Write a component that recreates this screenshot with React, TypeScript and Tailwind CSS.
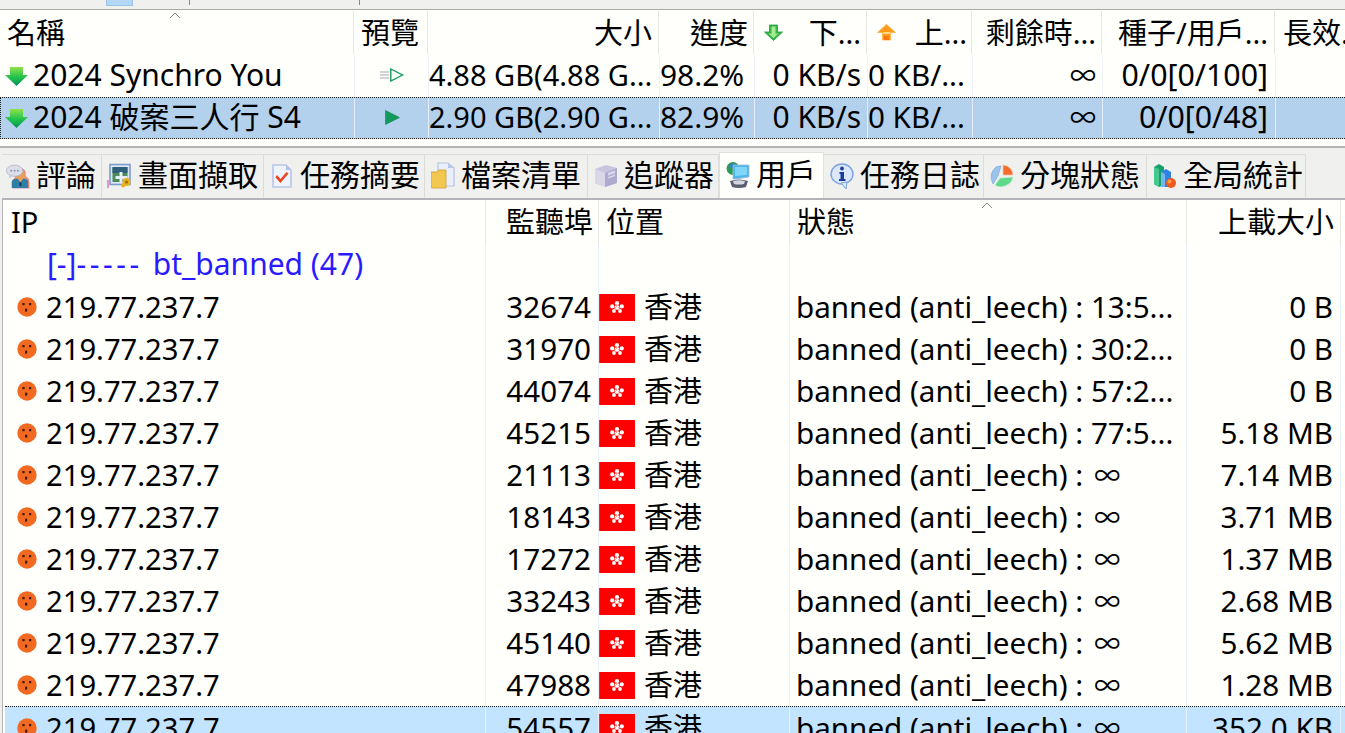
import React from "react";

const font = "font-['Noto_Sans','Noto_Sans_CJK_TC',sans-serif]";
const topHead = "grid grid-cols-[354px_74px_231px_95px_113px_105px_130px_173px_70px] h-[45px]";
const topRow = "grid grid-cols-[355px_74px_231px_95px_113px_105px_130px_173px_69px] h-[42px]";
const topRowSel = "grid grid-cols-[354px_74px_231px_95px_113px_105px_130px_173px_69px] h-[42px]";
const peerGrid = "grid grid-cols-[483px_113px_191px_397px_154px_5px]";
const peerGridSel = "grid grid-cols-[481px_113px_191px_397px_154px_5px]";

function Down({ className = "" }: { className?: string }) {
  return (
    <svg width="24" height="19" viewBox="0 0 24 19" className={className}>
      <defs>
        <linearGradient id="dg" x1="0" y1="0" x2="0" y2="1">
          <stop offset="0" stopColor="#8fe24a" />
          <stop offset="0.55" stopColor="#1fc24c" />
          <stop offset="1" stopColor="#0a8f58" />
        </linearGradient>
      </defs>
      <path d="M5 0H18V8H23L11.5 19L0 8H5Z" fill="url(#dg)" />
    </svg>
  );
}

function HeadArrow({ up }: { up?: boolean }) {
  return up ? (
    <svg width="19" height="17" viewBox="0 0 19 17">
      <path d="M9.5 0.5L18.5 8.5H13.5V16H5.5V8.5H0.5Z" fill="#ff9a1a" stroke="#fbb040" strokeWidth="0.8" />
      <path d="M6 8H13V10H6Z" fill="#ffd98a" />
      <path d="M7 12H12V16H7Z" fill="#f47a10" />
    </svg>
  ) : (
    <svg width="19" height="17" viewBox="0 0 19 17">
      <path d="M5.5 1H13.5V8H18.5L9.5 16.5L0.5 8H5.5Z" fill="#35b54a" stroke="#1f9a3c" strokeWidth="0.8" />
      <path d="M7.5 2.5H11.5V9.5H14.5L9.5 14L4.5 9.5H7.5Z" fill="#a4ea8e" />
    </svg>
  );
}

function Face() {
  return (
    <svg width="20" height="20" viewBox="0 0 20 20" className="shrink-0">
      <circle cx="10" cy="10" r="9.7" fill="#f26a21" />
      <rect x="5.4" y="6" width="2.2" height="2.2" fill="#3a1a08" />
      <rect x="12" y="6" width="2.2" height="2.2" fill="#3a1a08" />
      <rect x="8" y="11.4" width="2.2" height="3.4" rx="1" fill="#3a1a08" />
    </svg>
  );
}

function Flag() {
  return (
    <svg width="36" height="27" viewBox="0 0 36 27" className="shrink-0">
      <rect width="36" height="27" fill="#ff0000" />
      <rect width="1" height="27" fill="#2f8a3a" />
      <g fill="#fff">
        <circle cx="18" cy="9.2" r="2.1" />
        <circle cx="13.2" cy="12.4" r="2.1" />
        <circle cx="22.8" cy="12.4" r="2.1" />
        <circle cx="15" cy="17" r="1.9" />
        <circle cx="21" cy="17" r="1.9" />
        <circle cx="18" cy="13.6" r="2.5" />
      </g>
      <path d="M17.6 10V13M15 13L17 14M21 13L19 14M16.4 16.5L17.4 15M19.6 16.5L18.6 15" stroke="#ff5050" strokeWidth="0.6" />
    </svg>
  );
}

const icons: Record<string, React.ReactNode> = {
  comment: (
    <svg width="25" height="25" viewBox="0 0 24 26">
      <path d="M9 8C10 3 18 3 20 8V13L22 14Q24 15 24 20V25H7V20Q7 15 10 14Z" fill="#e9a05f" stroke="#d75f9a" strokeWidth="0.6" />
      <path d="M6 25V18Q8 15 12 15L15 19L18 15Q22 15 23 18V25Z" fill="#2f7ea8" />
      <path d="M14 19H16V23H14Z" fill="#123a55" />
      <ellipse cx="9" cy="7" rx="8.5" ry="5.8" fill="#dcdfea" stroke="#a9adc4" strokeWidth="0.8" />
      <path d="M4 11L3 15L8 12Z" fill="#c6cada" />
      <circle cx="5.5" cy="7" r="0.9" fill="#7b86a8" />
      <circle cx="9" cy="7" r="0.9" fill="#7b86a8" />
      <circle cx="12.5" cy="7" r="0.9" fill="#7b86a8" />
    </svg>
  ),
  shot: (
    <svg width="25" height="26" viewBox="0 0 24 26">
      <rect x="0" y="17" width="1" height="8" fill="#d6409a" />
      <rect x="2.5" y="1.5" width="20" height="20" fill="#dce6f5" stroke="#7d9ec8" strokeWidth="1.6" />
      <rect x="5" y="4" width="15" height="15" fill="#4c8a58" />
      <rect x="5" y="4" width="15" height="6" fill="#2f5f7c" />
      <rect x="12" y="9" width="3" height="11" fill="#e6eefa" />
      <rect x="8" y="13" width="12" height="3" fill="#e6eefa" />
      <circle cx="19" cy="19" r="4" fill="#e7b21c" />
      <circle cx="19" cy="19" r="1.6" fill="#a06f10" />
      <circle cx="15.5" cy="22.5" r="2" fill="#e7b21c" />
    </svg>
  ),
  summary: (
    <svg width="20" height="26" viewBox="0 0 20 26">
      <path d="M1 2H14L19 7V24H1Z" fill="#eef3fc" stroke="#b9c5ea" strokeWidth="1.6" />
      <path d="M14 2V7H19Z" fill="#aebfe8" />
      <path d="M5 12L8.5 16L14.5 9L16.5 10.5L8.5 20L3.5 14.5Z" fill="#ea4420" />
    </svg>
  ),
  files: (
    <svg width="24" height="28" viewBox="0 0 24 28">
      <path d="M7 1H17L23 6V24H7Z" fill="#eaf0fb" stroke="#b4c2e4" strokeWidth="1.2" />
      <path d="M17 1V6H23Z" fill="#b8c8ec" />
      <path d="M0 10H6L8 8H15V26H1Q0 26 0 25Z" fill="#f2c94e" stroke="#cfa030" strokeWidth="0.8" />
    </svg>
  ),
  tracker: (
    <svg width="24" height="24" viewBox="0 0 24 24">
      <path d="M1 5L12 1L23 4V19L11 23L1 19Z" fill="#c8c6de" />
      <path d="M1 5L11 9V23L1 19Z" fill="#dad8e8" />
      <path d="M11 9L23 4V19L11 23Z" fill="#aeabd0" />
      <path d="M14 9L21 6.5V9L14 11.5ZM14 13L21 10.5V12L14 14.5Z" fill="#dcdaec" />
    </svg>
  ),
  peers: (
    <svg width="24" height="28" viewBox="0 0 24 28">
      <circle cx="7" cy="7.5" r="6.5" fill="#2f9a58" />
      <path d="M3 4Q7 1 9 4L6 8Z" fill="#2b7fd4" />
      <path d="M7 4H23V16L10 18H7Z" fill="#4db4ee" stroke="#a8bdd2" strokeWidth="0.8" />
      <path d="M9 6H21V14L9 15Z" fill="#7fd6f8" />
      <path d="M4 20Q13 17 22 20L20 26Q13 28 6 26Z" fill="#5a6072" />
      <path d="M7 20Q13 18.5 19 20L18 23Q13 24 8 23Z" fill="#d4d7df" />
    </svg>
  ),
  log: (
    <svg width="24" height="26" viewBox="0 0 24 26">
      <ellipse cx="12" cy="11" rx="11" ry="10" fill="#dbe8fb" stroke="#7ba3dd" strokeWidth="1.4" />
      <path d="M11 20L16 26L17 19Z" fill="#dbe8fb" stroke="#7ba3dd" strokeWidth="1" />
      <circle cx="12" cy="5.5" r="1.9" fill="#1a3c9c" />
      <path d="M9.5 9H14V16H15.5V18H9V16H10.5V11H9.5Z" fill="#1a3c9c" />
    </svg>
  ),
  piece: (
    <svg width="24" height="24" viewBox="0 0 24 24">
      <path d="M11 2L8 12L3 20Q-2 10 6 3Q8 2 11 2Z" fill="#9cc4ea" stroke="#6ea2d8" strokeWidth="0.6" />
      <path d="M13 1Q22 2 23 11H13Z" fill="#f46a2a" stroke="#f4c8a8" strokeWidth="0.8" />
      <path d="M10 14L23 13Q22 21 11 23Q7 23 5 21Z" fill="#5fd88a" stroke="#cdeed8" strokeWidth="0.8" />
    </svg>
  ),
  stats: (
    <svg width="24" height="26" viewBox="0 0 24 26">
      <path d="M1 4L6 1L11 4V22L6 24L1 21Z" fill="#1aa06a" />
      <path d="M1 4L6 6V24L1 21Z" fill="#44c890" />
      <path d="M8 9L13 6L18 9V24H8Z" fill="#2f84e0" />
      <path d="M8 9L12 11V24H8Z" fill="#73b6f2" />
      <circle cx="18" cy="20" r="5" fill="#f0581c" />
      <circle cx="16.5" cy="18.5" r="2" fill="#ff9a4a" />
    </svg>
  ),
};

const Sort = ({ className }: { className: string }) => (
  <svg width="12" height="7" viewBox="0 0 12 7" className={className}>
    <path d="M1 6L6 1L11 6" fill="none" stroke="#8a8a8a" strokeWidth="1" />
  </svg>
);

const tabs = [
  { t: "評論", i: "comment", w: "w-[100px] pl-[3px]" },
  { t: "畫面擷取", i: "shot", w: "w-[162px] pl-[5px]" },
  { t: "任務摘要", i: "summary", w: "w-[161px] pl-[5px]" },
  { t: "檔案清單", i: "files", w: "w-[163px] pl-[5px]" },
  { t: "追蹤器", i: "tracker", w: "w-[131px] pl-[5px]" },
  { t: "用戶", i: "peers", w: "w-[105px] pl-[5px]", active: true },
  { t: "任務日誌", i: "log", w: "w-[160px] pl-[5px]" },
  { t: "分塊狀態", i: "piece", w: "w-[163px] pl-[5px]" },
  { t: "全局統計", i: "stats", w: "w-[159px] pl-[5px]" },
];

const topCell = "flex items-center overflow-hidden whitespace-nowrap border-r pb-[2px]";
const headCell = "flex items-center overflow-hidden whitespace-nowrap border-r border-[#e6e6e2] relative my-[1px]";

const peers: [string, string, string | null, string][] = [
  ["32674", "banned (anti_leech) : 13:5...", null, "0 B"],
  ["31970", "banned (anti_leech) : 30:2...", null, "0 B"],
  ["44074", "banned (anti_leech) : 57:2...", null, "0 B"],
  ["45215", "banned (anti_leech) : 77:5...", null, "5.18 MB"],
  ["21113", "banned (anti_leech) : ", "∞", "7.14 MB"],
  ["18143", "banned (anti_leech) : ", "∞", "3.71 MB"],
  ["17272", "banned (anti_leech) : ", "∞", "1.37 MB"],
  ["33243", "banned (anti_leech) : ", "∞", "2.68 MB"],
  ["45140", "banned (anti_leech) : ", "∞", "5.62 MB"],
  ["47988", "banned (anti_leech) : ", "∞", "1.28 MB"],
  ["54557", "banned (anti_leech) : ", "∞", "352.0 KB"],
];

function PreviewIcon({ filled }: { filled?: boolean }) {
  return filled ? (
    <svg width="15" height="15" viewBox="0 0 15 15" className="ml-[2px]">
      <path d="M0.5 0.5L14.5 7.5L0.5 14.5Z" fill="#109a5c" stroke="#0d8a50" strokeWidth="0.6" />
    </svg>
  ) : (
    <svg width="24" height="14" viewBox="0 0 24 14">
      <path d="M0 4H9M0 7H9M0 10H9" stroke="#a8a8b0" strokeWidth="1.2" />
      <path d="M10.8 1L22.5 7L10.8 13Z" fill="none" stroke="#109a5c" strokeWidth="1.4" />
    </svg>
  );
}

function TopRow({ name, preview, size, pct, seeds, selected }: { name: string; preview: React.ReactNode; size: string; pct: string; seeds: string; selected?: boolean }) {
  const sep = selected ? "border-[#e4eef8]" : "border-[#eef3fa]";
  return (
    <div className={selected ? `${topRowSel} bg-[#b3d0ec] border border-r-0 border-dotted border-[#222]` : topRow}>
      <div className={`${topCell} ${sep} ${selected ? "pl-[4px]" : "pl-[5px]"} gap-[4px]`}>
        <Down className="shrink-0 mt-[2px]" />
        <span className="text-[30px]">{name}</span>
      </div>
      <div className={`${topCell} ${sep} justify-center`}>{preview}</div>
      <div className={`${topCell} ${sep} pl-0`}>{size}</div>
      <div className={`${topCell} ${sep} text-[29.9px]`}>{pct}</div>
      <div className={`${topCell} ${sep} justify-end pr-[6px] text-[30px]`}>0 KB/s</div>
      <div className={`${topCell} ${sep} text-[29.6px]`}>0 KB/...</div>
      <div className={`${topCell} ${sep} justify-end pr-[6px] text-[26px]`}>∞</div>
      <div className={`${topCell} ${sep} justify-end pr-[7px] text-[30.3px]`}>{seeds}</div>
      <div />
    </div>
  );
}

export default function App() {
  return (
    <div className={`${font} w-[1345px] h-[733px] overflow-hidden bg-[#f0f0ee] text-[29px] leading-[36px] text-black flex flex-col`}>
      <div className="h-[9px] shrink-0 flex items-start border-b border-[#a9a9a9] box-content">
        <div className="ml-[106px] w-[27px] h-[6px] bg-[#b3d7f5] border border-t-0 border-[#9cc4e8]" />
        <div className="ml-[56px] w-px h-[5px] bg-[#8a8a8a]" />
        <div className="ml-[169px] w-px h-[5px] bg-[#8a8a8a]" />
      </div>

      <div className="h-[136px] shrink-0 bg-[#fffffb] border-b-2 border-[#b4b4b4] box-content">
        <div className={topHead}>
          <div className={`${headCell} pl-[7px]`}>
            名稱
            <Sort className="absolute left-[169px] top-[1px]" />
          </div>
          <div className={`${headCell} pl-[7px]`}>預覽</div>
          <div className={`${headCell} justify-end pr-[6px]`}>大小</div>
          <div className={`${headCell} justify-end pr-[5px]`}>進度</div>
          <div className={`${headCell} justify-between pl-[10px] pr-[5px]`}>
            <HeadArrow />
            <span>下...</span>
          </div>
          <div className={`${headCell} justify-between pl-[10px] pr-[4px]`}>
            <HeadArrow up />
            <span>上...</span>
          </div>
          <div className={`${headCell} justify-end pr-[5px]`}>剩餘時...</div>
          <div className={`${headCell} justify-end pr-[6px]`}>種子/用戶...</div>
          <div className="flex items-center overflow-hidden whitespace-nowrap pl-[8px] my-[1px]">長效...</div>
        </div>
        <TopRow name="2024 Synchro You" preview={<PreviewIcon />} size="4.88 GB(4.88 G..." pct="98.2%" seeds="0/0[0/100]" />
        <TopRow name="2024 破案三人行 S4" preview={<PreviewIcon filled />} size="2.90 GB(2.90 G..." pct="82.9%" seeds="0/0[0/48]" selected />
      </div>

      <div className="h-[50px] shrink-0 flex items-end pl-[2px] text-[30px]">
        {tabs.map((tab) => (
          <div
            key={tab.t}
            className={`${tab.w} shrink-0 flex items-center gap-[6px] whitespace-nowrap overflow-hidden border-r border-[#d8d8d4] ${
              tab.active ? "h-[46px] bg-[#fffffb] border-t border-l border-[#e0e0dc]" : "h-[44px] border-t border-[#dcdcd8]"
            }`}
          >
            <span className="w-[25px] h-[28px] shrink-0 flex items-center justify-center -mt-[1px]">{icons[tab.i]}</span>
            <span className="-mt-[3px]">{tab.t}</span>
          </div>
        ))}
      </div>

      <div className="flex-1 min-h-0 ml-[2px] bg-[#fffffb] border-t-2 border-l border-[#b4b4b8] overflow-hidden">
        <div className={`${peerGrid} h-[44px]`}>
          <div className="flex items-center pl-[8px] border-r border-[#e6e6e2]">IP</div>
          <div className="flex items-center justify-end pr-[5px] border-r border-[#e6e6e2]">監聽埠</div>
          <div className="flex items-center pl-[7px] border-r border-[#e6e6e2]">位置</div>
          <div className="flex items-center pl-[7px] border-r border-[#e6e6e2] relative">
            狀態
            <Sort className="absolute left-[191px] top-[2px]" />
          </div>
          <div className="flex items-center justify-end pr-[6px] border-r border-[#e6e6e2]">上載大小</div>
          <div />
        </div>
        <div className={`${peerGrid} h-[42px]`}>
          <div className="flex items-center pl-[44px] pb-[2px] border-r border-[#e8f0fb] text-[#2a1aff] text-[30px] whitespace-nowrap">
            <span>[-]</span>
            <span className="tracking-[3.6px] mr-[2px]">-----</span>
            <span className="ml-[8px]">bt_banned (47)</span>
          </div>
          <div className="border-r border-[#e8f0fb]" />
          <div className="border-r border-[#e8f0fb]" />
          <div className="border-r border-[#e8f0fb]" />
          <div className="border-r border-[#e8f0fb]" />
          <div />
        </div>
        {peers.map(([port, status, inf, up], i) => {
          const sel = i === peers.length - 1;
          return (
            <div key={port} className={sel ? `${peerGridSel} ml-[2px] h-[42px] bg-[#c3e4ff] border-t border-dotted border-[#222]` : `${peerGrid} h-[42px]`}>
              <div className={`flex items-center gap-[9px] ${sel ? "pl-[12px]" : "pl-[14px]"} border-r border-[#e8f0fb]`}>
                <Face />
                <span className="text-[29.2px]">219.77.237.7</span>
              </div>
              <div className="flex items-center justify-end pr-[7px] border-r border-[#e8f0fb] text-[29.6px]">{port}</div>
              <div className="flex items-center gap-[9px] border-r border-[#e8f0fb]">
                <Flag />
                <span>香港</span>
              </div>
              <div className="flex items-center pl-[6px] border-r border-[#e8f0fb] whitespace-nowrap overflow-hidden text-[29.6px]">
                <span>{status}</span>
                {inf && <span className="text-[26px] ml-[11px]">{inf}</span>}
              </div>
              <div className="flex items-center justify-end pr-[7px] border-r border-[#e8f0fb] text-[29.6px]">{up}</div>
              <div />
            </div>
          );
        })}
      </div>
    </div>
  );
}
